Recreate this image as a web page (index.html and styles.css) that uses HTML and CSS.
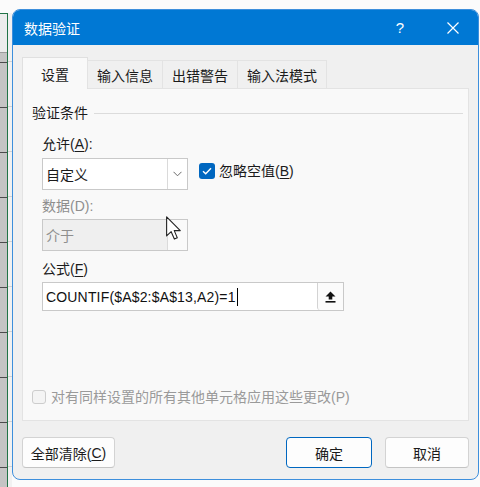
FILE: index.html
```html
<!DOCTYPE html>
<html lang="zh-CN">
<head>
<meta charset="utf-8">
<title>数据验证</title>
<link rel="stylesheet" href="styles.css">
</head>
<body>
<div class="page">
  <div class="sheet">
    <div class="sheet-a"></div>
    <div class="sheet-b"></div>
  </div>
  <div class="dialog">
    <div class="titlebar">
      <span class="title">数据验证</span>
      <div class="tb-btns">
        <span class="tb-btn tb-help">?</span>
        <span class="tb-btn">
          <svg width="12" height="12" viewBox="0 0 12 12"><path d="M0.5 0.5 L11.5 11.5 M11.5 0.5 L0.5 11.5" stroke="#fff" stroke-width="1.2" fill="none"/></svg>
        </span>
      </div>
    </div>
    <div class="content">
      <div class="tabs">
        <div class="tab active">设置</div>
        <div class="tab">输入信息</div>
        <div class="tab">出错警告</div>
        <div class="tab">输入法模式</div>
      </div>
      <div class="panel">
        <div class="group-title"><span>验证条件</span><span class="rule"></span></div>
        <div class="label lbl-allow">允许(<u>A</u>):</div>
        <div class="row">
          <div class="combo">
            <span class="combo-text">自定义</span>
            <span class="combo-btn">
              <svg width="9" height="6" viewBox="0 0 9 6"><path d="M0.5 0.8 L4.5 4.8 L8.5 0.8" stroke="#6a6a6a" stroke-width="1" fill="none"/></svg>
            </span>
          </div>
          <div class="check">
            <span class="box checked">
              <svg width="10" height="8" viewBox="0 0 10 8"><path d="M1 4.2 L3.7 6.8 L9 1.2" stroke="#fff" stroke-width="1.4" fill="none"/></svg>
            </span>
            <span>忽略空值(<u>B</u>)</span>
          </div>
        </div>
        <div class="label lbl-data disabled-text">数据(D):</div>
        <div class="combo combo-disabled">
          <span class="combo-text">介于</span>
          <span class="combo-btn"></span>
        </div>
        <div class="label lbl-formula">公式(<u>F</u>)</div>
        <div class="formula">
          <span class="formula-text">COUNTIF($A$2:$A$13,A2)=1<span class="caret"></span></span>
          <span class="ref-btn">
            <svg width="11" height="12" viewBox="0 0 11 12"><path d="M5.5 0.5 L10.5 5.5 L7.3 5.5 L7.3 8.6 L3.7 8.6 L3.7 5.5 L0.5 5.5 Z" fill="#111"/><rect x="0.5" y="10" width="10" height="1.6" fill="#111"/></svg>
          </span>
        </div>
        <div class="spacer"></div>
        <div class="check check-disabled">
          <span class="box"></span>
          <span>对有同样设置的所有其他单元格应用这些更改(P)</span>
        </div>
      </div>
      <div class="buttons">
        <div class="btn btn-clear">全部清除(<u>C</u>)</div>
        <div class="btn btn-ok">确定</div>
        <div class="btn btn-cancel">取消</div>
      </div>
    </div>
    <svg class="cursor" width="16" height="25" viewBox="0 0 13 20"><path d="M0.5 0.5 L0.5 16 L4.2 12.6 L6.8 18.6 L9.2 17.6 L6.7 11.7 L11.6 11.7 Z" fill="#fff" stroke="#222" stroke-width="0.9" stroke-linejoin="round"/></svg>
  </div>
</div>
</body>
</html>
```
FILE: styles.css
```css
* { box-sizing: border-box; }
html, body { margin: 0; padding: 0; }
body {
  width: 480px;
  height: 487px;
  overflow: hidden;
  background: #fbfbfb;
  font-family: "Liberation Sans", "Noto Sans CJK SC", sans-serif;
  font-size: 14px;
  color: #1b1b1b;
}
u { text-decoration-thickness: 1px; text-underline-offset: 2px; }
.page { display: flex; height: 487px; }

.sheet { flex: none; width: 12px; display: flex; padding-top: 13px; }
.sheet-a {
  width: 8px;
  border-top: 1px solid #217346;
  border-right: 1px solid #217346;
  background:
    linear-gradient(#ececec, #ececec) 0 0 / 100% 38px no-repeat,
    linear-gradient(#9c9c9c, #9c9c9c) 0 38px / 100% 1px no-repeat,
    repeating-linear-gradient(#c4c4c4 0 44px, #4b4b4b 44px 45px) 0 4px;
}
.sheet-b {
  flex: 1;
  background:
    repeating-linear-gradient(#f1f1f1 0 44px, #d2d2d2 44px 45px) 0 4px;
}

.dialog {
  flex: none;
  position: relative;
  width: 467px;
  height: 471px;
  margin-top: 9px;
  border: 1px solid #3d8fdc;
  border-radius: 8px;
  background: #f0f0f0;
  display: flex;
  flex-direction: column;
  overflow: hidden;
}
.titlebar {
  flex: none;
  height: 35px;
  background: #0078d4;
  color: #fff;
  display: flex;
  align-items: center;
  padding-left: 11px;
}
.title { font-size: 14px; }
.tb-btns { margin-left: auto; margin-right: 2px; display: flex; gap: 7px; }
.tb-btn { width: 46px; height: 35px; display: flex; align-items: center; justify-content: center; }
.tb-help { font-size: 15px; }

.content {
  flex: 1;
  display: flex;
  flex-direction: column;
  padding: 12px 9px 11px 9px;
}
.tabs { flex: none; display: flex; align-items: flex-end; height: 31px; position: relative; z-index: 1; }
.tab {
  height: 28px;
  padding: 0 9px;
  display: flex;
  align-items: center;
  border: 1px solid #e3e3e3;
  border-bottom: none;
  background: #f0f0f0;
  margin-left: -1px;
}
.tab.active {
  height: 32px;
  margin-bottom: -1px;
  margin-left: 0;
  padding: 0 18px;
  background: #f9f9f9;
  border-color: #e0e0e0;
}

.panel {
  flex: 1;
  display: flex;
  flex-direction: column;
  background: #f9f9f9;
  border: 1px solid #e3e3e3;
  padding: 14px 5px 13px 19px;
}
.group-title { display: flex; align-items: center; gap: 6px; margin-left: -10px; height: 20px; line-height: 20px; }
.rule { flex: 1; height: 1px; background: #dcdcdc; }
.label { height: 20px; line-height: 20px; }
.lbl-allow { margin-top: 11px; }
.lbl-data { margin-top: 6px; }
.lbl-formula { margin-top: 8px; }
.disabled-text { color: #8e8e8e; }

.row { display: flex; align-items: flex-start; gap: 11px; margin-top: 4px; }
.combo {
  width: 146px;
  height: 32px;
  border: 1px solid #c9c9c9;
  background: #fff;
  display: flex;
}
.combo-text { flex: 1; display: flex; align-items: center; padding-left: 3px; }
.combo-btn { width: 20px; border-left: 1px solid #dadada; display: flex; align-items: center; justify-content: center; }
.combo-disabled { margin-top: 3px; background: #efefef; color: #8e8e8e; }
.combo-disabled .combo-btn { background: #fafafa; }

.check { display: flex; align-items: center; gap: 4px; height: 20px; line-height: 20px; margin-top: 3px; }
.box { width: 16px; height: 16px; border-radius: 3px; display: flex; align-items: center; justify-content: center; }
.box.checked { background: #0067c0; }
.check-disabled { margin-top: 0; margin-left: -10px; gap: 5px; color: #9a9a9a; }
.check-disabled .box { width: 14px; height: 14px; border: 1px solid #cdcdcd; background: #f4f4f4; }

.formula {
  margin-top: 3px;
  width: 302px;
  height: 29px;
  border: 1px solid #c9c9c9;
  background: #fff;
  display: flex;
}
.formula-text { flex: 1; display: flex; align-items: center; padding-left: 3px; color: #111; letter-spacing: 0.17px; }
.caret { width: 1px; height: 18px; background: #000; margin-left: 1px; }
.ref-btn {
  width: 26px;
  border-left: 1px solid #d3d3d3;
  border-radius: 0 0 3px 3px;
  background: #fbfbfb;
  display: flex;
  align-items: center;
  justify-content: center;
}
.spacer { flex: 1; }

.buttons { flex: none; display: flex; margin-top: 16px; height: 31px; }
.btn {
  height: 31px;
  border: 1px solid #d3d3d3;
  border-bottom-color: #c4c4c4;
  border-radius: 4px;
  background: #fdfdfd;
  display: flex;
  align-items: center;
  justify-content: center;
}
.btn-clear { width: 93px; }
.btn-ok { width: 86px; margin-left: auto; border-color: #0067c0; }
.btn-cancel { width: 84px; margin-left: 13px; }

.cursor { position: absolute; left: 153px; top: 206px; }
```
